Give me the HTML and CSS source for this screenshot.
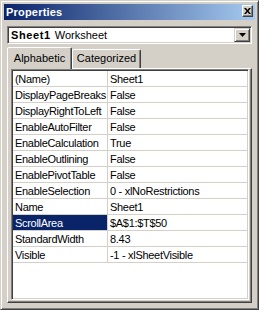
FILE: index.html
```html
<!DOCTYPE html>
<html lang="en">
<head>
    <meta charset="UTF-8">
    <title>Properties</title>
    <link rel="stylesheet" href="styles.css">
</head>
<body>
    <div class="window">
        <div class="titlebar">
            <span class="title">Properties</span>
            <span class="close-btn">
                <svg width="7" height="6" viewBox="0 0 7 6"><path d="M0 0h2l1.5 2L5 0h2L4.5 3 7 6H5L3.5 4 2 6H0l2.5-3z" fill="#000"/></svg>
            </span>
        </div>

        <div class="combo">
            <span class="combo-text"><b>Sheet1</b> Worksheet</span>
            <span class="drop-btn">
                <svg width="7" height="4" viewBox="0 0 7 4"><path d="M0 0h7L3.5 4z" fill="#000"/></svg>
            </span>
        </div>

        <div class="tabs">
            <div class="tab tab-alpha active">Alphabetic</div>
            <div class="tab tab-cat">Categorized</div>
        </div>

        <div class="panel">
            <div class="grid">
                <div class="row"><div class="name">(Name)</div><div class="value">Sheet1</div></div>
                <div class="row"><div class="name">DisplayPageBreaks</div><div class="value">False</div></div>
                <div class="row"><div class="name">DisplayRightToLeft</div><div class="value">False</div></div>
                <div class="row"><div class="name">EnableAutoFilter</div><div class="value">False</div></div>
                <div class="row"><div class="name">EnableCalculation</div><div class="value">True</div></div>
                <div class="row"><div class="name">EnableOutlining</div><div class="value">False</div></div>
                <div class="row"><div class="name">EnablePivotTable</div><div class="value">False</div></div>
                <div class="row"><div class="name">EnableSelection</div><div class="value">0 - xlNoRestrictions</div></div>
                <div class="row"><div class="name">Name</div><div class="value">Sheet1</div></div>
                <div class="row selected"><div class="name">ScrollArea</div><div class="value">$A$1:$T$50</div></div>
                <div class="row"><div class="name">StandardWidth</div><div class="value">8.43</div></div>
                <div class="row"><div class="name">Visible</div><div class="value">-1 - xlSheetVisible</div></div>
            </div>
        </div>
    </div>
</body>
</html>
```

FILE: styles.css
```css
body { margin: 0; font-family: "Liberation Sans", Arial, sans-serif; font-size: 11px; color: #000; }

.window { width: 259px; height: 310px; box-sizing: border-box; background: #d4d0c8; border: 1px solid; border-color: #d4d0c8 #404040 #404040 #d4d0c8; box-shadow: inset 1px 1px #fff, inset -1px -1px #808080; padding: 3px; display: flex; flex-direction: column; }

.titlebar { height: 16px; flex: none; display: flex; align-items: flex-start; background: linear-gradient(to right, #0a246a, #a6caf0); color: #fff; font-weight: bold; }
.title { flex: 1; line-height: 16px; padding-left: 2px; letter-spacing: 0.2px; }
.close-btn { width: 11px; height: 12px; margin: 1px 2px 0 0; box-sizing: border-box; background: #d4d0c8; border: 1px solid; border-color: #fff #404040 #404040 #fff; box-shadow: inset -1px -1px #808080; display: flex; align-items: center; justify-content: center; }

.combo { flex: none; height: 18px; margin: 6px 3px 0; box-sizing: border-box; background: #fff; border: 1px solid; border-color: #808080 #fff #fff #808080; box-shadow: inset 1px 1px #404040, inset -1px -1px #d4d0c8; padding: 1px; display: flex; }
.combo-text { flex: 1; line-height: 14px; padding-left: 2px; white-space: nowrap; }
.combo-text b { letter-spacing: 0.6px; margin-right: 1px; }
.drop-btn { width: 16px; box-sizing: border-box; background: #d4d0c8; border: 1px solid; border-color: #d4d0c8 #404040 #404040 #d4d0c8; box-shadow: inset 1px 1px #fff, inset -1px -1px #808080; display: flex; align-items: center; justify-content: center; }

.tabs { flex: none; height: 21px; margin: 3px 3px 0; display: flex; align-items: flex-end; }
.tab { height: 19px; box-sizing: border-box; border: 1px solid; border-bottom: none; border-color: #fff #404040 transparent #fff; border-radius: 2px 2px 0 0; box-shadow: inset -1px 0 #808080; line-height: 16px; text-align: center; white-space: nowrap; }
.tab-alpha { width: 65px; }
.tab-cat { width: 69px; }
.tab.active { height: 22px; margin-bottom: -1px; position: relative; z-index: 1; background: #d4d0c8; padding-top: 2px; }

.panel { flex: 1; margin: 0 3px 3px; box-sizing: border-box; border: 1px solid; border-color: #fff #404040 #404040 #fff; box-shadow: inset -1px -1px #808080; padding: 0 2px 2px 3px; display: flex; }
.grid { flex: 1; box-sizing: border-box; background: #fff; border: 1px solid; border-color: #808080 #fff #fff #808080; box-shadow: inset 1px 1px #404040, inset -1px -1px #d4d0c8; padding: 1px; letter-spacing: -0.3px; }

.row { display: flex; height: 16px; box-sizing: border-box; border-bottom: 1px solid #d4d0c8; padding-top: 1px; line-height: 14px; white-space: nowrap; }
.name { width: 95px; flex: none; box-sizing: border-box; border-right: 1px solid #d4d0c8; margin-top: -1px; padding: 1px 0 0 2px; overflow: hidden; }
.value { padding-left: 2px; }
.row.selected .name { background: #0a246a; color: #fff; }
```
